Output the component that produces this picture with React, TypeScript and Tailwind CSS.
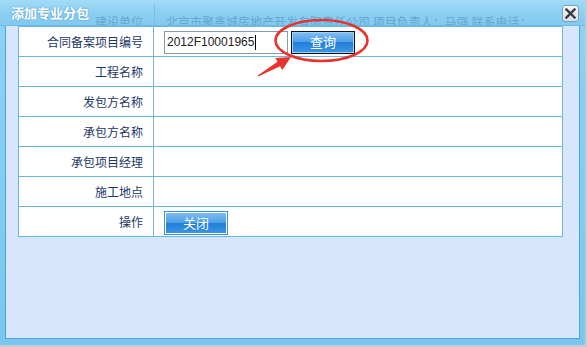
import React from "react";

const rows = ["合同备案项目编号", "工程名称", "发包方名称", "承包方名称", "承包项目经理", "施工地点", "操作"];

const cjk = "font-['Noto_Sans_CJK_SC','Noto_Sans',sans-serif]";

function BlueButton({ label, framed }: { label: string; framed?: boolean }) {
    const inner = (
        <div className="w-full h-full flex flex-col relative">
            <div className="flex-1 bg-gradient-to-b from-[#7cbcf1] to-[#4f9de6]" />
            <div className="flex-1 bg-gradient-to-b from-[#1f7ed8] to-[#3a95e4]" />
            <span className={`absolute inset-0 flex items-center justify-center text-white text-[13px] ${cjk}`}>{label}</span>
        </div>
    );
    if (framed) {
        return (
            <div className="w-[64px] h-[24px] border border-[#3c93dc] bg-white p-px">{inner}</div>
        );
    }
    return <div className="w-[64px] h-[23px] border border-[#111] p-px bg-[#9fd0f5]">{inner}</div>;
}

export default function App() {
    return (
        <div className="w-[587px] h-[347px] bg-[#c7cacf]">
            <div className="relative w-[585px] h-[345px] bg-gradient-to-b from-[#8fd2f4] to-[#79c6ef] flex flex-col">
                {/* title bar */}
                <div className="relative h-[26px] bg-gradient-to-b from-[#a2dbf7] via-[#8dcff3] to-[#80c9f0] border-b border-[#6bbbe8] overflow-hidden">
                    {/* scrolled row showing through the title bar */}
                    <div className={`absolute left-[19px] top-[14px] flex text-[12px] leading-[16px] text-[#66a6cf] ${cjk}`}>
                        <div className="w-[135px] pr-[11px] text-right">建设单位</div>
                        <div className="w-px h-[30px] bg-[#7cbde2] -mt-[10px]" />
                        <div className="pl-[11px] whitespace-nowrap">北京市聚鑫城房地产开发有限责任公司 项目负责人：马强 联系电话：</div>
                    </div>
                    <div className={`relative pl-[11px] pt-[4px] text-[13px] font-bold text-white leading-[18px] [text-shadow:0_0_2px_rgba(40,110,170,0.6)] ${cjk}`}>
                        添加专业分包
                    </div>
                    <div className="absolute right-[6px] top-[5px] w-[17px] h-[17px] rounded-[3px] border border-[#7e9db4] bg-gradient-to-b from-[#f3f7fa] to-[#d3e0ea] flex items-center justify-center">
                        <svg width="11" height="11" viewBox="0 0 11 11">
                            <path d="M1.5 1.5 L9.5 9.5 M9.5 1.5 L1.5 9.5" stroke="#3a3a3a" strokeWidth="2.4" strokeLinecap="square" />
                        </svg>
                    </div>
                </div>

                {/* body */}
                <div className="flex-1 mx-[5px] mb-[6px] border-x border-b border-[#4ca4dc] bg-[#d7e6fd] pl-[12px] pr-[16px]">
                    <div className={`border border-[#6cb8db] bg-white ${cjk}`}>
                        {rows.map((label, i) => (
                            <div key={label} className={`flex h-[29px] ${i < rows.length - 1 ? "border-b border-[#6cb8db] h-[30px]" : ""}`}>
                                <div className="w-[135px] border-r border-[#6cb8db] pr-[10px] flex items-center justify-end text-[12px] text-[#1c3766]">
                                    {label}
                                </div>
                                <div className="flex-1 pl-[10px] flex items-center">
                                    {i === 0 && (
                                        <div className="flex items-center gap-[3px] pt-[1px]">
                                            <div className="w-[124px] h-[23px] border border-[#7f9cb9] bg-white flex items-center pl-[2px] font-['Liberation_Sans',sans-serif] text-[12px] text-[#222]">
                                                2012F10001965
                                                <span className="ml-px w-px h-[15px] bg-black" />
                                            </div>
                                            <BlueButton label="查询" />
                                        </div>
                                    )}
                                    {i === rows.length - 1 && (
                                        <div className="pt-[2px]">
                                            <BlueButton label="关闭" framed />
                                        </div>
                                    )}
                                </div>
                            </div>
                        ))}
                    </div>
                </div>

                {/* annotation: red ellipse and arrow */}
                <svg className="absolute left-0 top-0 pointer-events-none" width="585" height="345">
                    <ellipse cx="321.5" cy="40.5" rx="46" ry="20.5" fill="none" stroke="#e8322b" strokeWidth="2.6" />
                    <polygon
                        points="291,57 282.3,70.1 280.05,66.2 258.3,76.6 257.7,75.4 277.55,61.8 275.3,57.9"
                        fill="#e8322b"
                    />
                </svg>
            </div>
        </div>
    );
}
